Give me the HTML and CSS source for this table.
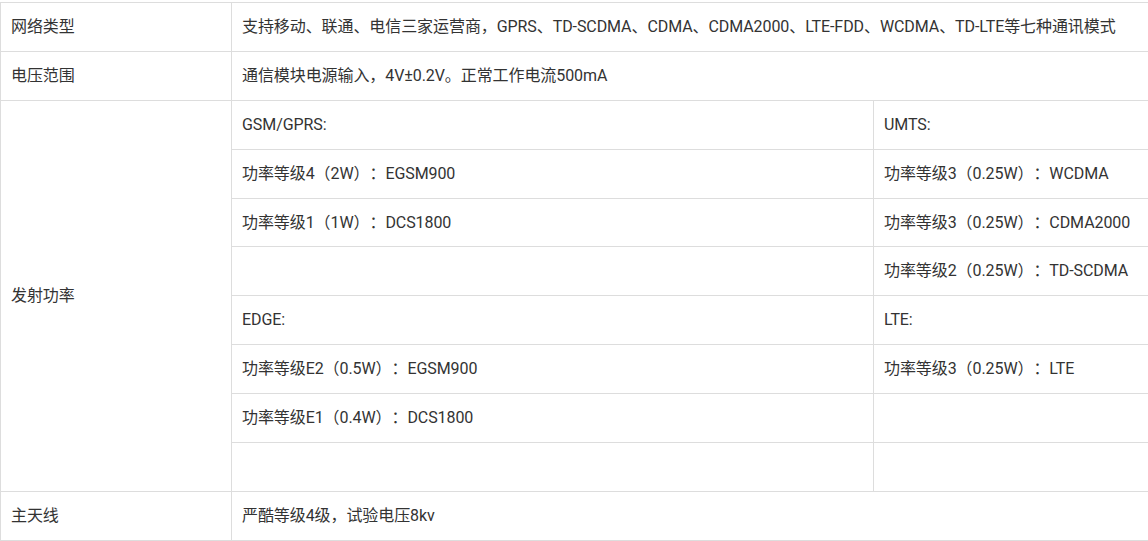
FILE: index.html
```html
<!DOCTYPE html>
<html lang="zh-CN">
<head>
<meta charset="utf-8">
<title>参数</title>
<link rel="stylesheet" href="styles.css">
</head>
<body>
<div class="wrap">
<table class="spec">
  <colgroup>
    <col class="c1">
    <col class="c2">
    <col class="c3">
  </colgroup>
  <tbody>
    <tr><td>网络类型</td><td colspan="2">支持移动、联通、电信三家运营商，GPRS、TD-SCDMA、CDMA、CDMA2000、LTE-FDD、WCDMA、TD-LTE等七种通讯模式</td></tr>
    <tr><td>电压范围</td><td colspan="2">通信模块电源输入，4V±0.2V。正常工作电流500mA</td></tr>
    <tr><td rowspan="8">发射功率</td><td>GSM/GPRS:</td><td>UMTS:</td></tr>
    <tr><td>功率等级4（2W）：EGSM900</td><td>功率等级3（0.25W）：WCDMA</td></tr>
    <tr><td>功率等级1（1W）：DCS1800</td><td>功率等级3（0.25W）：CDMA2000</td></tr>
    <tr><td></td><td>功率等级2（0.25W）：TD-SCDMA</td></tr>
    <tr><td>EDGE:</td><td>LTE:</td></tr>
    <tr><td>功率等级E2（0.5W）：EGSM900</td><td>功率等级3（0.25W）：LTE</td></tr>
    <tr><td>功率等级E1（0.4W）：DCS1800</td><td></td></tr>
    <tr><td></td><td></td></tr>
    <tr><td>主天线</td><td colspan="2">严酷等级4级，试验电压8kv</td></tr>
  </tbody>
</table>
</div>
</body>
</html>
```
FILE: styles.css
```css
html, body {
  margin: 0;
  padding: 0;
  background: #fff;
  overflow: hidden;
}
.wrap {
  padding-top: 2px;
  width: 1148px;
  overflow: hidden;
}
.spec {
  border-collapse: collapse;
  table-layout: fixed;
  width: 1180px;
  font-family: Roboto, "Noto Sans CJK SC", sans-serif;
  font-size: 16px;
  letter-spacing: -0.08px;
  color: #333;
  text-spacing-trim: space-all;
}
.c1 { width: 231px; }
.c2 { width: 642px; }
.c3 { width: 307px; }
.spec td {
  border: 1px solid #dddddd;
  padding: 12px 10px 11.9px;
  line-height: 24px;
  height: 24px;
  vertical-align: middle;
  white-space: nowrap;
  box-sizing: content-box;
}
```
